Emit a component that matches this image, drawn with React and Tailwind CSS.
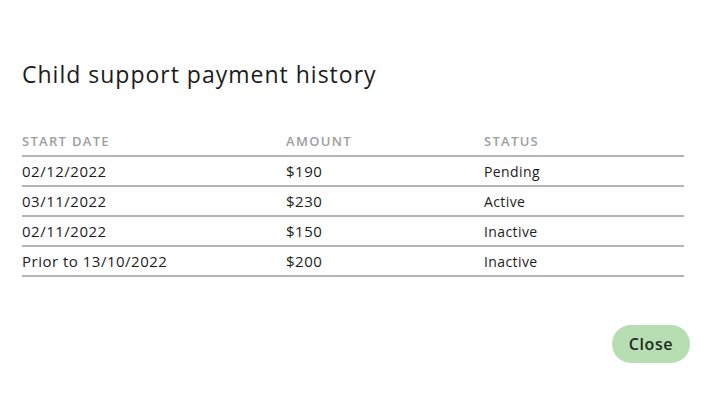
import React from 'react';

const rows = [
    { date: '02/12/2022', amount: '$190', status: 'Pending' },
    { date: '03/11/2022', amount: '$230', status: 'Active' },
    { date: '02/11/2022', amount: '$150', status: 'Inactive' },
    { date: 'Prior to 13/10/2022', amount: '$200', status: 'Inactive' },
];

const App = () => {
    return (
        <div className="w-[720px] h-[404px] bg-white font-['Open_Sans',sans-serif] text-[#1c1c1c] flex flex-col">
            <h1 className="ml-[22px] mt-[59px] text-[23px] leading-[30px] tracking-[1px] font-medium">Child support payment history</h1>

            <div className="mx-[22px] mt-[43px] w-[662px]">
                <div className="grid grid-cols-[264px_198px_1fr] h-[25px] items-start border-b-2 border-[#b4b4b4] text-[13px] leading-[18px] tracking-[1.3px] text-[#9e9e9e] uppercase font-semibold">
                    <span>Start Date</span>
                    <span>Amount</span>
                    <span>Status</span>
                </div>
                {rows.map((r, i) => (
                    <div key={i} className="grid grid-cols-[264px_198px_1fr] h-[30px] items-center border-b-2 border-[#b4b4b4] font-medium">
                        <span className="text-[15px] tracking-[0.5px]">{r.date}</span>
                        <span className="text-[15px] tracking-[0.5px]">{r.amount}</span>
                        <span className="text-[14px] tracking-[0.4px]">{r.status}</span>
                    </div>
                ))}
            </div>

            <div className="flex justify-end mr-[30px] mt-[48px]">
                <button className="w-[78px] h-[38px] rounded-full bg-[#b7ddb3] text-[16px] tracking-[0.6px] text-[#1e2a1e] font-semibold">
                    Close
                </button>
            </div>
        </div>
    );
};

export default App;
